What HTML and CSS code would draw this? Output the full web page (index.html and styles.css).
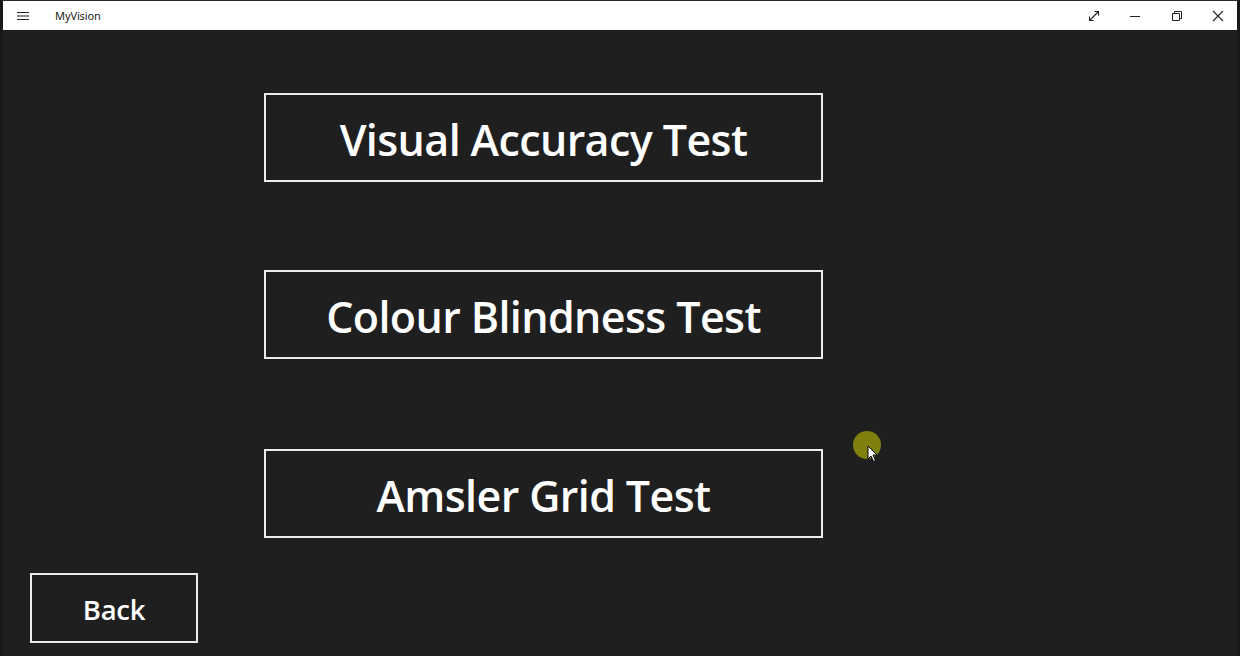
FILE: index.html
```html
<!DOCTYPE html>
<html lang="en">
<head>
<meta charset="utf-8">
<title>MyVision</title>
<link rel="stylesheet" href="styles.css">
</head>
<body>
<div class="window">
  <header class="titlebar">
    <div class="title-left">
      <svg class="hamburger" width="12" height="10" viewBox="0 0 12 10"><path d="M0 1.5H12M0 5H12M0 8.5H12" stroke="#222" stroke-width="1.2"/></svg>
      <span class="app-name">MyVision</span>
    </div>
    <div class="controls">
      <span class="ctl"><svg width="12" height="12" viewBox="0 0 12 12"><path d="M1.5 10.5L10.5 1.5M6.5 1.5H10.5V5.5M1.5 6.5V10.5H5.5" fill="none" stroke="#222" stroke-width="1.1"/></svg></span>
      <span class="ctl"><svg width="12" height="12" viewBox="0 0 12 12"><path d="M1 6.5H11" stroke="#222" stroke-width="1"/></svg></span>
      <span class="ctl"><svg width="12" height="12" viewBox="0 0 12 12"><path d="M1.5 3.5H8.5V10.5H1.5Z M3.5 3.5V1.5H10.5V8.5H8.5" fill="none" stroke="#222" stroke-width="1"/></svg></span>
      <span class="ctl"><svg width="12" height="12" viewBox="0 0 12 12"><path d="M1 1L11 11M11 1L1 11" stroke="#222" stroke-width="1.1"/></svg></span>
    </div>
  </header>
  <main class="content">
    <div class="tests">
      <button class="test-btn">Visual Accuracy Test</button>
      <button class="test-btn">Colour Blindness Test</button>
      <button class="test-btn third">Amsler Grid Test</button>
    </div>
    <button class="back-btn">Back</button>
    <div class="pointer">
      <span class="dot"></span>
      <svg class="arrow" width="12" height="18" viewBox="0 0 12 18"><path d="M1 1V14L4 11L6.5 16.5L8.5 15.5L6 10H10Z" fill="#fff" stroke="#000" stroke-width="1"/></svg>
    </div>
  </main>
</div>
</body>
</html>
```
FILE: styles.css
```css
html, body {
  margin: 0;
  padding: 0;
  background: #1f1f1f;
}
.window {
  width: 1240px;
  height: 656px;
  box-sizing: border-box;
  border-left: 3px solid #181818;
  border-right: 3px solid #181818;
  border-top: 1px solid #2a2a2a;
  display: flex;
  flex-direction: column;
  font-family: "Open Sans", "Noto Sans", sans-serif;
  overflow: hidden;
}
.titlebar {
  height: 29px;
  background: #ffffff;
  display: flex;
  align-items: center;
  justify-content: space-between;
  flex-shrink: 0;
}
.title-left {
  display: flex;
  align-items: center;
}
.hamburger {
  margin-left: 14px;
}
.app-name {
  margin-left: 26px;
  font-family: "Noto Sans", "Open Sans", sans-serif;
  font-size: 11px;
  color: #222;
  letter-spacing: -0.1px;
}
.controls {
  display: flex;
  margin-right: -2px;
}
.ctl {
  width: 41.5px;
  height: 29px;
  display: flex;
  align-items: center;
  justify-content: center;
}
.content {
  flex: 1;
  position: relative;
  background: #1f1f1f;
  padding: 63px 0 0 27px;
  display: flex;
  flex-direction: column;
}
.tests {
  display: flex;
  flex-direction: column;
  gap: 88px;
  margin-left: 234px;
  width: 559px;
}
.test-btn, .back-btn {
  background: transparent;
  border: 2px solid #ececec;
  color: #ffffff;
  font-family: "Open Sans", "Noto Sans", sans-serif;
  font-weight: 600;
  padding: 0;
  margin: 0;
  box-sizing: border-box;
}
.test-btn {
  height: 89px;
  width: 559px;
  font-size: 43px;
  letter-spacing: -0.6px;
  padding-top: 3px;
}
.test-btn.third {
  margin-top: 2px;
}
.back-btn {
  margin-top: 35px;
  width: 168px;
  height: 70px;
  font-size: 27.5px;
  letter-spacing: -0.3px;
  padding-top: 2px;
}
.pointer {
  position: absolute;
  left: 850px;
  top: 401px;
  width: 30px;
  height: 30px;
}
.dot {
  position: absolute;
  left: 0;
  top: 0;
  width: 28px;
  height: 28px;
  border-radius: 50%;
  background: #80800f;
}
.arrow {
  position: absolute;
  left: 14px;
  top: 14px;
}
```
